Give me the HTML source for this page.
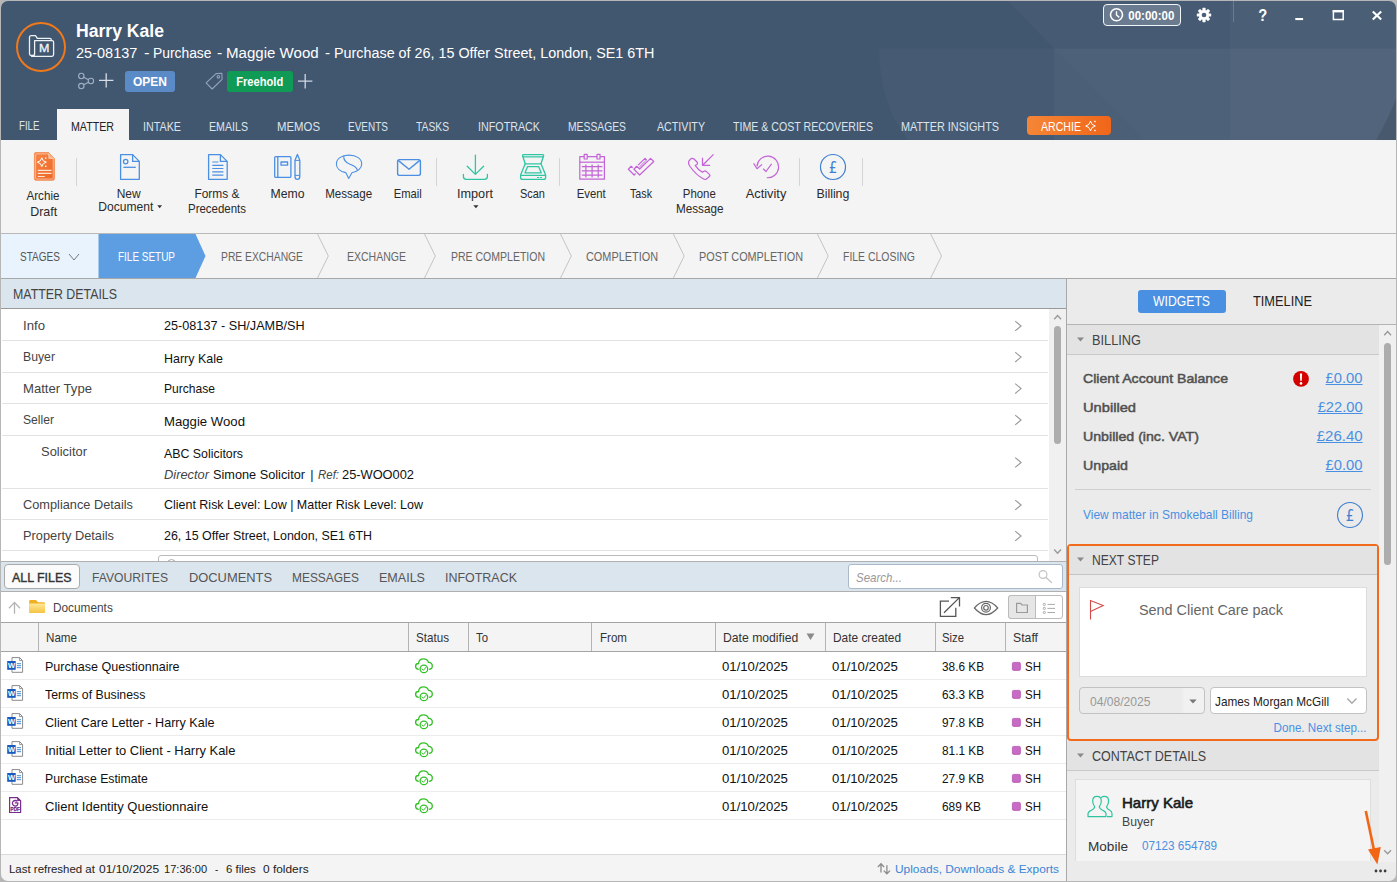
<!DOCTYPE html>
<html lang="en">
<head>
<meta charset="utf-8">
<title>Harry Kale - Matter</title>
<style>
*{box-sizing:border-box;margin:0;padding:0}
html,body{width:1397px;height:882px;overflow:hidden;background:#f4f4f4;font-family:"Liberation Sans",sans-serif}
#app{position:relative;width:1397px;height:882px;overflow:hidden;background:#f4f4f4}
.b{position:absolute}
.t{position:absolute;white-space:pre;line-height:1}
svg{position:absolute;overflow:visible}
/* header */
#hdr{left:0;top:0;width:1397px;height:140px;background:#41566f;overflow:hidden}
#hdr .g1{display:none}
.vsep{position:absolute;width:1px;background:#d4d4d4}
.hline{position:absolute;height:1px}
.rowline{position:absolute;left:2px;width:1046px;height:1px;background:#e2e2e2}
.frow{position:absolute;left:1px;width:1065px;height:1px;background:#ececec}
.colsep{position:absolute;top:623px;width:1px;height:28px;background:#b4b4b4}
</style>
</head>
<body>
<div id="app">
<!-- ===== header ===== -->
<div id="hdr" class="b"><div class="g1 b"></div>
<svg style="left:0;top:0" width="1397" height="140" viewBox="0 0 1397 140">
<path d="M879 48.500Q880 105 908 140H1397V48.500Z" fill="#fff" fill-opacity=".03"/>
<path d="M1007 0L1054 48.500V140H1397V0Z" fill="#fff" fill-opacity=".03"/>
<path d="M1054 48.500L1144 140H1397V48.500Z" fill="#fff" fill-opacity=".012"/>
<rect x="1230" y="0" width="167" height="140" fill="#fff" fill-opacity=".022"/>
<path d="M1397 96Q1388 120 1376 140H1397Z" fill="#000" fill-opacity=".1"/>
</svg>

</div>
<div class="b" style="left:57px;top:109px;width:72px;height:32px;background:#f4f4f4"></div>
<div class="b" style="left:125px;top:70.500px;width:50px;height:21px;background:#5b8bc7;border-radius:3px"></div>
<div class="b" style="left:227px;top:70.500px;width:66px;height:21px;background:#0f9b56;border-radius:3px"></div>
<div class="b" style="left:1103px;top:4px;width:78px;height:22px;border:1px solid #f2f5f8;border-radius:4px;background:rgba(255,255,255,.2)"></div>
<div class="b" style="left:1233px;top:1px;width:1px;height:21px;background:#6a7c92"></div>
<div class="b" style="left:1027px;top:116px;width:84px;height:19px;border-radius:4px;background:linear-gradient(90deg,#f58636,#f0661a)"></div>
<svg style="left:0;top:0" width="1397" height="140" viewBox="0 0 1397 140">
<!-- matter circle icon -->
<circle cx="41" cy="47" r="24" fill="none" stroke="#f0791b" stroke-width="2"/>
<g fill="none" stroke="#eef2f6" stroke-width="1.3" stroke-linejoin="round">
<path d="M34.5 55.5H31.2Q29.5 55.5 29.5 53.8V37.2Q29.5 35.6 31.2 35.6H35.5L37.3 38.3H49.8Q51.3 38.3 51.3 39.8V40.6"/>
<path d="M34.6 40.7H52Q53.6 40.7 53.6 42.3V54.6Q53.6 56.3 52 56.3H31.6Q34.6 56.3 34.6 53.4Z"/>
</g>
<text x="44.200" y="52.200" font-family="Liberation Sans, sans-serif" font-size="11.800" fill="#eef2f6" stroke="#eef2f6" stroke-width=".350" text-anchor="middle" textLength="10.400" lengthAdjust="spacingAndGlyphs">M</text>
<!-- share + plus -->
<g fill="none" stroke="#9fb0c3" stroke-width="1.1">
<circle cx="81.3" cy="76" r="2.7"/><circle cx="90.9" cy="81" r="2.7"/><circle cx="81.3" cy="86.1" r="2.7"/>
<path d="M83.7 77.3L88.5 79.8M88.5 82.3L83.7 84.8"/>
</g>
<path d="M99 80.4H113.4M106.2 73.2V87.6" stroke="#d6dde6" stroke-width="1.3" fill="none"/>
<!-- tag + plus -->
<g fill="none" stroke="#93a5b9" stroke-width="1.1" stroke-linejoin="round">
<path d="M221.9 73.3L222.1 79.3L212.1 89L206.1 82.8L216.1 73.6Z"/><circle cx="218.4" cy="76.8" r="1.3"/>
</g>
<path d="M298 81.2H312.4M305.2 74V88.4" stroke="#d0d8e2" stroke-width="1.3" fill="none"/>
<!-- clock -->
<circle cx="1116.500" cy="14.800" r="6" fill="none" stroke="#fff" stroke-width="1.600"/>
<path d="M1116.5 11.2V15L1119.3 17.4" fill="none" stroke="#fff" stroke-width="1.4"/>
<!-- gear -->
<g transform="translate(1204 15)" fill="#fff">
<circle r="5.1"/>
<g><rect x="-1.6" y="-7.2" width="3.2" height="14.4" rx=".6"/><rect x="-1.6" y="-7.2" width="3.2" height="14.4" rx=".6" transform="rotate(45)"/>
<rect x="-1.6" y="-7.2" width="3.2" height="14.4" rx=".6" transform="rotate(90)"/><rect x="-1.6" y="-7.2" width="3.2" height="14.4" rx=".6" transform="rotate(135)"/></g>
<circle r="2.3" fill="#4a5f78"/>
</g>
<!-- window controls -->
<rect x="1295.3" y="18" width="7.8" height="2.1" fill="#fff"/>
<path d="M1333.4 11.4H1343.2V19.4H1333.4Z" fill="none" stroke="#fff" stroke-width="1.5"/><rect x="1332.6" y="10" width="11.4" height="2.2" fill="#fff"/>
<path d="M1372.8 11.4L1381.2 19.6M1381.2 11.4L1372.8 19.6" stroke="#fff" stroke-width="2.1" fill="none"/>
<!-- archie sparkle -->
<path d="M1090.5 121.2Q1091.3 125.2 1095.3 126Q1091.3 126.8 1090.5 130.8Q1089.7 126.8 1085.7 126Q1089.7 125.2 1090.5 121.2Z" fill="none" stroke="#fff" stroke-width="1"/>
<rect x="1094.2" y="120.8" width="1.4" height="1.4" fill="#fff"/><rect x="1094.2" y="129.8" width="1.4" height="1.4" fill="#fff"/>
</svg>

<!-- ===== ribbon ===== -->
<div class="b" style="left:0;top:140px;width:1397px;height:93px;background:#f4f4f4"></div>
<div class="vsep" style="left:76px;top:158px;height:28px"></div>
<div class="vsep" style="left:436px;top:158px;height:28px"></div>
<div class="vsep" style="left:559px;top:158px;height:28px"></div>
<div class="vsep" style="left:799px;top:158px;height:28px"></div>
<div class="vsep" style="left:862px;top:158px;height:28px"></div>
<svg style="left:0;top:140px" width="900" height="93" viewBox="0 140 900 93">
<defs><linearGradient id="og" x1="0" y1="0" x2="1" y2="1"><stop offset="0" stop-color="#f6874a"/><stop offset="1" stop-color="#ef6520"/></linearGradient></defs>
<!-- Archie draft -->
<path d="M35.6 152.6H48.6L54.4 158.6V178.6Q54.4 180.2 52.8 180.2H35.6Q34.4 180.2 34.4 178.8V153.8Q34.4 152.6 35.6 152.6Z" fill="url(#og)" stroke="#f4915a" stroke-width="1"/>
<path d="M36.300 153.900H48.100L53.200 159.200V178.100Q53.200 179 52.300 179H36.300Q35.600 179 35.600 178.200V154.600Q35.600 153.900 36.300 153.900Z" fill="none" stroke="#fcd9c4" stroke-width=".700"/>
<path d="M48.8 153.2V158.4H54" fill="#f9b892" stroke="#fbd0b6" stroke-width=".8"/>
<path d="M41.800 157.700Q42.400 161.600 46.300 162.200Q42.400 162.800 41.800 166.700Q41.200 162.800 37.300 162.200Q41.200 161.600 41.800 157.700Z" fill="none" stroke="#fff" stroke-width="1"/>
<rect x="45" y="157.4" width="1.4" height="1.4" fill="#fff"/><rect x="45" y="165.6" width="1.4" height="1.4" fill="#fff"/>
<path d="M37.8 170.3H51.6M37.8 173.4H51.6M37.8 176.5H44.8" stroke="#fde3d3" stroke-width="1.2" fill="none"/>
<g fill="none" stroke="#4a8fe3" stroke-width="1.3" stroke-linejoin="round">
<!-- New document -->
<path d="M120.6 154.6H132.6L139.3 161.4V179.3H120.6Z"/><path d="M132.6 154.8V161.4H139.2" /><circle cx="125.7" cy="161.6" r="2.2"/><path d="M123.4 167.3H135.8"/>
<!-- Forms -->
<path d="M208.6 154.6H220.4L227.2 161.4V179.3H208.6Z"/><path d="M220.4 154.8V161.4H227"/>
<path d="M212.3 162H218.4M212.3 165.3H223.4M212.3 168.5H223.4M212.3 171.8H223.4M212.3 175.1H223.4" stroke-width="1.2"/>
<!-- Memo -->
<rect x="274.7" y="156.6" width="16.2" height="20.8" rx="1.2"/><path d="M277.8 156.6V177.4"/><rect x="281" y="162" width="6.6" height="3.2" />
<path d="M295 160.2V176.2Q295 179.4 297.4 179.4Q299.8 179.4 299.8 176.2V160.2L297.4 154.4Z"/><path d="M295 160.4H299.8M295 175.4H299.8" stroke-width="1"/>
<!-- Message -->
<path d="M349 155.1C356.6 155.1 361.7 158.8 361.7 163.9C361.7 168.4 357.6 171.9 351.9 172.7L348.7 178.4L345.8 172.6C340.3 171.7 336.4 168.3 336.4 163.9C336.4 158.8 341.4 155.1 349 155.1Z" stroke-width="1.1"/>
<path d="M343.8 155.8C343.2 160.6 346.2 162.8 350 164.2C353.6 165.5 356.6 166.8 357.6 170.4" stroke-width="1.1"/>
<!-- Email -->
<rect x="397.6" y="159.6" width="22.8" height="15.8" rx="1.8" stroke-width="1.4"/><path d="M398.2 160.4L409 169.2L419.8 160.4" stroke-width="1.4"/>
</g>
<g fill="none" stroke="#30c5a2" stroke-width="1.3" stroke-linejoin="round" stroke-linecap="round">
<!-- Import -->
<path d="M475.4 155.2V174.2M467.2 166.2L475.4 174.4L483.6 166.2"/><path d="M463.4 174.4V176.6Q463.4 179.4 466.2 179.4H484.6Q487.4 179.4 487.4 176.6V174.4"/>
<!-- Scan -->
<path d="M523.6 154.6H542.6Q543.8 154.6 543.6 155.8L541 163.8H525.2L522.6 155.8Q522.4 154.6 523.6 154.6Z"/><path d="M523 156.8H543.2"/>
<path d="M525.2 163.8L520.6 175V177.4Q520.6 179.4 522.6 179.4H543.6Q545.6 179.4 545.6 177.4V175L541 163.8"/>
<path d="M520.8 175.4H545.4"/><path d="M527.6 166.6H538.6L541.2 172.8H525Z"/><path d="M537.4 177.5H538.6M540.4 177.5H541.6" stroke-width="1"/>
</g>
<g fill="none" stroke="#c463d8" stroke-width="1.2" stroke-linejoin="round">
<!-- Event -->
<rect x="579.8" y="156.6" width="24.6" height="22.6"/><path d="M579.8 162.2H604.4"/>
<rect x="584.2" y="154.4" width="3" height="4.6" fill="#f4f4f4"/><rect x="597" y="154.4" width="3" height="4.6" fill="#f4f4f4"/>
<path d="M585.9 164.4V177.4M592.1 164.4V177.4M598.2 164.4V177.4M581.8 166.6H602.4M581.8 170.8H602.4M581.8 175.1H602.4"/>
<!-- Task -->
<path d="M628.350 169.250L634.100 175L648.200 161.500L645 158.330L634.100 169.050L631.100 166.270Z"/>
<path d="M633.900 169.250L639.660 175L653.750 161.500L650.570 158.330L639.660 169.050L636.680 166.270Z" fill="#f4f4f4" stroke="#f4f4f4" stroke-width="3.800"/>
<path d="M633.900 169.250L639.660 175L653.750 161.500L650.570 158.330L639.660 169.050L636.680 166.270Z"/>
<path d="M645 158.330L646.600 159.900L639.300 167.100" stroke-width="1"/>
<!-- Phone -->
<path d="M692.200 158.300Q693.200 158.300 694 159L697 162Q698 163.200 697.200 164.200L695.300 165.600Q698 169.600 702.400 172.300L704 171.200Q705.200 170.600 706.400 171.600L709.400 174.400Q710.400 175.600 709.400 176.600L706.400 179Q705.200 179.800 703.600 179Q696.500 175.500 690 166.500Q688 163.500 688.600 161.800Q689 160.600 690.400 159.200Q691.200 158.300 692.200 158.300Z" stroke-width="1.250"/>
<path d="M713.500 154.400L702.900 165M702.500 157.800V165.300H710" stroke-width="1.250"/>
<!-- Activity -->
<path d="M757 166.4A10.800 10.800 0 1 1 766.8 177.700"/><path d="M753.600 163.400L757 168.700L762 164.400"/><path d="M763.200 168.800L766 171.500L771.600 163.800"/>
</g>
<!-- Billing -->
<circle cx="833" cy="167" r="12.500" fill="none" stroke="#3f7fd0" stroke-width="1.200"/>
<!-- dropdown arrows -->
<path d="M157.300 205.200H162L159.650 208.300Z" fill="#333"/><path d="M473.300 205.200H478.500L475.900 208.300Z" fill="#333"/>
</svg>

<!-- ===== stages ===== -->
<div class="hline" style="left:0;top:233px;width:1397px;background:#b9b9b9"></div>
<div class="b" style="left:1px;top:234px;width:97px;height:44px;background:#e9f3fd"></div>
<svg style="left:98px;top:234px" width="900" height="44" viewBox="0 0 900 44">
<path d="M0.5 0H97.5L107.5 22L97.5 44H0.5Z" fill="#5d9ee3"/>
<g fill="none" stroke="#c4c4c4" stroke-width="1">
<path d="M219.500 0l10.800 22l-10.800 22"/><path d="M326.500 0l10.800 22l-10.800 22"/><path d="M462.500 0l10.800 22l-10.800 22"/>
<path d="M575.400 0l10.800 22l-10.800 22"/><path d="M719.400 0l10.800 22l-10.800 22"/><path d="M832.700 0l10.800 22l-10.800 22"/>
</g></svg>
<svg style="left:68px;top:253px" width="12" height="9" viewBox="0 0 12 9"><path d="M1 1l5 6L11 1" fill="none" stroke="#777" stroke-width="1"/></svg>
<div class="hline" style="left:0;top:278px;width:1397px;background:#a8a8a8"></div>
<!-- ===== matter details ===== -->
<div class="b" style="left:1px;top:279px;width:1065px;height:29px;background:#dbe5ee"></div>
<div class="hline" style="left:1px;top:308px;width:1065px;background:#9a9a9a"></div>
<div class="b" style="left:1px;top:309px;width:1048px;height:252px;background:#fff"></div>
<div class="rowline" style="top:340px"></div><div class="rowline" style="top:372px"></div><div class="rowline" style="top:403px"></div>
<div class="rowline" style="top:435px"></div><div class="rowline" style="top:488px"></div><div class="rowline" style="top:519px"></div><div class="rowline" style="top:550px"></div>
<div class="b" style="left:158px;top:555px;width:880px;height:10px;border:1px solid #bbb;border-radius:3px;background:#fff"></div>
<div class="b" style="left:167px;top:558.500px;width:9px;height:9px;border:1px solid #aaa;border-radius:50%"></div>
<!-- details scrollbar -->
<div class="b" style="left:1049px;top:309px;width:17px;height:252px;background:#f0f0f0"></div>
<div class="b" style="left:1054px;top:326px;width:7px;height:118px;border-radius:4px;background:#adadad"></div>
<svg style="left:0;top:279px" width="1066" height="290" viewBox="0 279 1066 290">
<g fill="none" stroke="#999" stroke-width="1.100">
<path d="M1015.200 321.1L1021.100 326.0L1015.200 330.9"/>
<path d="M1015.200 352.2L1021.100 357.1L1015.200 362.0"/>
<path d="M1015.200 383.7L1021.100 388.6L1015.200 393.5"/>
<path d="M1015.200 415.1L1021.100 420.0L1015.200 424.9"/>
<path d="M1015.200 457.6L1021.100 462.5L1015.200 467.4"/>
<path d="M1015.200 500.1L1021.100 505.0L1015.200 509.9"/>
<path d="M1015.200 531.1L1021.100 536.0L1015.200 540.9"/>
</g><g fill="none" stroke="#999" stroke-width="1.400"><path d="M1054.200 319.200L1057.600 315.600L1061 319.200"/><path d="M1054.200 549.600L1057.600 553.200L1061 549.600"/>
</g></svg>
<!-- ===== files ===== -->
<div class="hline" style="left:1px;top:561px;width:1065px;background:#b0b0b0"></div>
<div class="b" style="left:1px;top:562px;width:1065px;height:29px;background:#dbe5ee"></div>
<div class="b" style="left:4px;top:564px;width:76px;height:25px;background:#fbfbfb;border:1px solid #aaa;border-radius:4px"></div>
<div class="b" style="left:848px;top:564px;width:215px;height:25px;background:#fff;border:1px solid #a9b9c9;border-radius:3px"></div>
<div class="hline" style="left:1px;top:591px;width:1065px;background:#b0b0b0"></div>
<div class="b" style="left:1px;top:592px;width:1065px;height:263px;background:#fff"></div>
<div class="b" style="left:1008px;top:595px;width:55px;height:24px;border:1px solid #bbb;border-radius:3px;background:#fff"></div>
<div class="b" style="left:1008px;top:595px;width:28px;height:24px;border:1px solid #bbb;border-radius:3px 0 0 3px;background:#e6e6e6"></div>
<div class="hline" style="left:1px;top:622px;width:1065px;background:#a4a4a4"></div>
<div class="b" style="left:1px;top:623px;width:1065px;height:28px;background:#f4f4f4"></div>
<div class="hline" style="left:1px;top:651px;width:1065px;background:#a4a4a4"></div>
<div class="colsep" style="left:38px"></div><div class="colsep" style="left:408px"></div><div class="colsep" style="left:468px"></div><div class="colsep" style="left:591px"></div>
<div class="colsep" style="left:715px"></div><div class="colsep" style="left:825px"></div><div class="colsep" style="left:935px"></div><div class="colsep" style="left:1005px"></div>
<div class="frow" style="top:679px"></div><div class="frow" style="top:707px"></div><div class="frow" style="top:735px"></div>
<div class="frow" style="top:763px"></div><div class="frow" style="top:791px"></div><div class="frow" style="top:819px"></div>
<!-- status bar -->
<div class="hline" style="left:1px;top:854px;width:1065px;background:#dadada"></div>
<div class="b" style="left:1px;top:855px;width:1065px;height:27px;background:#f4f4f4"></div>
<svg style="left:0;top:560px" width="1066" height="322" viewBox="0 560 1066 322">
<g fill="none" stroke="#c2c2c2" stroke-width="1.2"><circle cx="1043" cy="574.500" r="3.900"/><path d="M1045.800 577.300L1051.800 582.800"/></g>
<path d="M14.500 613.800V602.400M9 608.200L14.500 602.400L20 608.200" fill="none" stroke="#b4b4b4" stroke-width="1.300"/>
<defs><linearGradient id="fg" x1="0" y1="0" x2="0" y2="1"><stop offset="0" stop-color="#ffe79a"/><stop offset="1" stop-color="#f6c443"/></linearGradient></defs>
<path d="M29.200 601.200Q29.200 600 30.400 600H36L38 602.200H43.800Q45 602.200 45 603.400V611.700Q45 612.900 43.800 612.900H30.400Q29.200 612.900 29.200 611.700Z" fill="#efb021"/>
<path d="M29.200 603.400H45V611.700Q45 612.900 43.800 612.900H30.400Q29.200 612.900 29.200 611.700Z" fill="url(#fg)"/>
<g fill="none" stroke="#555" stroke-width="1.300"><path d="M949 601.200H940.400V616.400H955.800V607.800"/><path d="M944 612.800L959.400 597.600M950.800 597.600H959.500V606.400"/></g>
<g fill="none" stroke="#6a6a6a" stroke-width="1.200"><path d="M974.400 608Q986 594.800 997.700 608Q986 621.200 974.400 608Z"/><circle cx="986" cy="607.800" r="4.400"/><circle cx="986" cy="607.800" r="2.300"/></g>
<path d="M1016.600 612.500V603.400H1020.600L1022 605H1027.400V612.500Z" fill="none" stroke="#9a9a9a" stroke-width="1.200"/>
<g fill="none" stroke="#aaa" stroke-width="1"><circle cx="1044.300" cy="604.400" r="1.100"/><circle cx="1044.300" cy="608.400" r="1.100"/><circle cx="1044.300" cy="612.500" r="1.100"/><path d="M1047.500 604.400H1055M1047.500 608.400H1055M1047.500 612.500H1055"/></g>
<path d="M806.500 633.500H814.500L810.500 640Z" fill="#8a8a8a"/>
<g transform="translate(0 0)"><path d="M12 657.600H19.600L22.600 660.600V672.300H12Z" fill="#fff" stroke="#8a8a8a" stroke-width="1"/><path d="M19.600 657.800V660.600H22.400" fill="none" stroke="#8a8a8a" stroke-width=".9"/><rect x="7.200" y="661" width="8.500" height="8.800" fill="#185abd"/><path d="M16.800 663.700H21M16.800 665.700H21M16.800 667.700H21" stroke="#2b7cd3" stroke-width=".9" fill="none"/><text x="11.450" y="668.400" font-family="Liberation Sans, sans-serif" font-size="7.500" font-weight="700" fill="#fff" text-anchor="middle">W</text></g>
<g transform="translate(0 0)" fill="none" stroke="#31c024" stroke-width="1.300" stroke-linecap="round"><path d="M419.600 669.300H418.800C416.800 669.300 415.600 667.900 415.600 666.300C415.600 664.700 416.900 663.500 418.500 663.500C418.800 660.700 420.900 658.900 423.600 658.900C426 658.900 427.900 660.300 428.500 662.400C430.600 662.500 432.300 664 432.300 666C432.300 667.900 430.800 669.300 428.800 669.300H428.200"/><circle cx="423.900" cy="668.900" r="5.200" fill="#fff" stroke="none"/><circle cx="423.900" cy="668.900" r="3.800" fill="#fff"/><path d="M422 668.800L423.400 670.300L426 667.300" stroke-width="1"/></g>
<rect x="1012.400" y="662.4" width="8" height="8" rx="1.300" fill="#c86bc4" stroke="#b556b1" stroke-width=".800"/>
<g transform="translate(0 28)"><path d="M12 657.600H19.600L22.600 660.600V672.300H12Z" fill="#fff" stroke="#8a8a8a" stroke-width="1"/><path d="M19.600 657.800V660.600H22.400" fill="none" stroke="#8a8a8a" stroke-width=".9"/><rect x="7.200" y="661" width="8.500" height="8.800" fill="#185abd"/><path d="M16.800 663.700H21M16.800 665.700H21M16.800 667.700H21" stroke="#2b7cd3" stroke-width=".9" fill="none"/><text x="11.450" y="668.400" font-family="Liberation Sans, sans-serif" font-size="7.500" font-weight="700" fill="#fff" text-anchor="middle">W</text></g>
<g transform="translate(0 28)" fill="none" stroke="#31c024" stroke-width="1.300" stroke-linecap="round"><path d="M419.600 669.300H418.800C416.800 669.300 415.600 667.900 415.600 666.300C415.600 664.700 416.900 663.500 418.500 663.500C418.800 660.700 420.900 658.900 423.600 658.900C426 658.900 427.900 660.300 428.500 662.400C430.600 662.500 432.300 664 432.300 666C432.300 667.900 430.800 669.300 428.800 669.300H428.200"/><circle cx="423.900" cy="668.900" r="5.200" fill="#fff" stroke="none"/><circle cx="423.900" cy="668.900" r="3.800" fill="#fff"/><path d="M422 668.800L423.400 670.300L426 667.300" stroke-width="1"/></g>
<rect x="1012.400" y="690.4" width="8" height="8" rx="1.300" fill="#c86bc4" stroke="#b556b1" stroke-width=".800"/>
<g transform="translate(0 56)"><path d="M12 657.600H19.600L22.600 660.600V672.300H12Z" fill="#fff" stroke="#8a8a8a" stroke-width="1"/><path d="M19.600 657.800V660.600H22.400" fill="none" stroke="#8a8a8a" stroke-width=".9"/><rect x="7.200" y="661" width="8.500" height="8.800" fill="#185abd"/><path d="M16.800 663.700H21M16.800 665.700H21M16.800 667.700H21" stroke="#2b7cd3" stroke-width=".9" fill="none"/><text x="11.450" y="668.400" font-family="Liberation Sans, sans-serif" font-size="7.500" font-weight="700" fill="#fff" text-anchor="middle">W</text></g>
<g transform="translate(0 56)" fill="none" stroke="#31c024" stroke-width="1.300" stroke-linecap="round"><path d="M419.600 669.300H418.800C416.800 669.300 415.600 667.900 415.600 666.300C415.600 664.700 416.900 663.500 418.500 663.500C418.800 660.700 420.900 658.900 423.600 658.900C426 658.900 427.900 660.300 428.500 662.400C430.600 662.500 432.300 664 432.300 666C432.300 667.900 430.800 669.300 428.800 669.300H428.200"/><circle cx="423.900" cy="668.900" r="5.200" fill="#fff" stroke="none"/><circle cx="423.900" cy="668.900" r="3.800" fill="#fff"/><path d="M422 668.800L423.400 670.300L426 667.300" stroke-width="1"/></g>
<rect x="1012.400" y="718.4" width="8" height="8" rx="1.300" fill="#c86bc4" stroke="#b556b1" stroke-width=".800"/>
<g transform="translate(0 84)"><path d="M12 657.600H19.600L22.600 660.600V672.300H12Z" fill="#fff" stroke="#8a8a8a" stroke-width="1"/><path d="M19.600 657.800V660.600H22.400" fill="none" stroke="#8a8a8a" stroke-width=".9"/><rect x="7.200" y="661" width="8.500" height="8.800" fill="#185abd"/><path d="M16.800 663.700H21M16.800 665.700H21M16.800 667.700H21" stroke="#2b7cd3" stroke-width=".9" fill="none"/><text x="11.450" y="668.400" font-family="Liberation Sans, sans-serif" font-size="7.500" font-weight="700" fill="#fff" text-anchor="middle">W</text></g>
<g transform="translate(0 84)" fill="none" stroke="#31c024" stroke-width="1.300" stroke-linecap="round"><path d="M419.600 669.300H418.800C416.800 669.300 415.600 667.900 415.600 666.300C415.600 664.700 416.900 663.500 418.500 663.500C418.800 660.700 420.900 658.900 423.600 658.900C426 658.900 427.900 660.300 428.500 662.400C430.600 662.500 432.300 664 432.300 666C432.300 667.900 430.800 669.300 428.800 669.300H428.200"/><circle cx="423.900" cy="668.900" r="5.200" fill="#fff" stroke="none"/><circle cx="423.900" cy="668.900" r="3.800" fill="#fff"/><path d="M422 668.800L423.400 670.300L426 667.300" stroke-width="1"/></g>
<rect x="1012.400" y="746.4" width="8" height="8" rx="1.300" fill="#c86bc4" stroke="#b556b1" stroke-width=".800"/>
<g transform="translate(0 112)"><path d="M12 657.600H19.600L22.600 660.600V672.300H12Z" fill="#fff" stroke="#8a8a8a" stroke-width="1"/><path d="M19.600 657.800V660.600H22.400" fill="none" stroke="#8a8a8a" stroke-width=".9"/><rect x="7.200" y="661" width="8.500" height="8.800" fill="#185abd"/><path d="M16.800 663.700H21M16.800 665.700H21M16.800 667.700H21" stroke="#2b7cd3" stroke-width=".9" fill="none"/><text x="11.450" y="668.400" font-family="Liberation Sans, sans-serif" font-size="7.500" font-weight="700" fill="#fff" text-anchor="middle">W</text></g>
<g transform="translate(0 112)" fill="none" stroke="#31c024" stroke-width="1.300" stroke-linecap="round"><path d="M419.600 669.300H418.800C416.800 669.300 415.600 667.900 415.600 666.300C415.600 664.700 416.900 663.500 418.500 663.500C418.800 660.700 420.900 658.900 423.600 658.900C426 658.900 427.900 660.300 428.500 662.400C430.600 662.500 432.300 664 432.300 666C432.300 667.900 430.800 669.300 428.800 669.300H428.200"/><circle cx="423.900" cy="668.900" r="5.200" fill="#fff" stroke="none"/><circle cx="423.900" cy="668.900" r="3.800" fill="#fff"/><path d="M422 668.800L423.400 670.300L426 667.300" stroke-width="1"/></g>
<rect x="1012.400" y="774.4" width="8" height="8" rx="1.300" fill="#c86bc4" stroke="#b556b1" stroke-width=".800"/>
<g transform="translate(0 140)"><path d="M9.600 657.600H17.400L20.600 660.800V672.500H9.600Z" fill="#fff" stroke="#7b2d8e" stroke-width="1.200"/><path d="M17.200 657.200V661H21Z" fill="#7b2d8e"/><path d="M17.300 661.400A2.800 2.800 0 1 0 17.700 664.600M14.800 662.900H17.800V664.600" fill="none" stroke="#7b2d8e" stroke-width="1.300"/><text x="15.200" y="671.200" font-family="Liberation Sans, sans-serif" font-size="5.200" font-weight="700" fill="#6a1f7d" stroke="#6a1f7d" stroke-width=".250" text-anchor="middle" textLength="9.200" lengthAdjust="spacingAndGlyphs">PDF</text></g>
<g transform="translate(0 140)" fill="none" stroke="#31c024" stroke-width="1.300" stroke-linecap="round"><path d="M419.600 669.300H418.800C416.800 669.300 415.600 667.900 415.600 666.300C415.600 664.700 416.900 663.500 418.500 663.500C418.800 660.700 420.900 658.900 423.600 658.900C426 658.900 427.900 660.300 428.500 662.400C430.600 662.500 432.300 664 432.300 666C432.300 667.900 430.800 669.300 428.800 669.300H428.200"/><circle cx="423.900" cy="668.900" r="5.200" fill="#fff" stroke="none"/><circle cx="423.900" cy="668.900" r="3.800" fill="#fff"/><path d="M422 668.800L423.400 670.300L426 667.300" stroke-width="1"/></g>
<rect x="1012.400" y="802.4" width="8" height="8" rx="1.300" fill="#c86bc4" stroke="#b556b1" stroke-width=".800"/>
<g fill="none" stroke="#8c8c8c" stroke-width="1.300"><path d="M881 872.400V863.800M877.900 867L881 863.800L884.100 867"/><path d="M886.900 865.200V873.800M883.800 870.600L886.900 873.800L890 870.600"/></g>
</svg>
<!-- ===== right panel ===== -->
<div class="b" style="left:1066px;top:279px;width:1px;height:603px;background:#a8a8a8"></div>
<div class="b" style="left:1067px;top:279px;width:330px;height:603px;background:#ebebeb"></div>
<div class="b" style="left:1138px;top:290px;width:88px;height:23px;background:#4a90e2;border-radius:3px"></div>
<div class="hline" style="left:1067px;top:324px;width:330px;background:#b4b4b4"></div>
<div class="b" style="left:1067px;top:325px;width:312px;height:536px;background:#ebebeb"></div>
<div class="b" style="left:1067px;top:325px;width:312px;height:30px;background:#e3e3e3;border-bottom:1px solid #c9c9c9"></div>
<div class="hline" style="left:1075px;top:489px;width:296px;background:#cfcfcf"></div>
<!-- next step -->
<div class="b" style="left:1067px;top:543.500px;width:311.500px;height:197px;border:2px solid #f26b1d;border-radius:4px;background:#ebebeb"></div>
<div class="b" style="left:1069px;top:545.500px;width:307.500px;height:29.500px;background:#e3e3e3;border-bottom:1px solid #c4c4c4"></div>
<div class="b" style="left:1079px;top:587px;width:288px;height:90px;background:#fff;border:1px solid #dcdcdc"></div>
<div class="b" style="left:1079px;top:687px;width:126px;height:27px;background:linear-gradient(90deg,#ebebeb 82%,#f1f1f1 84%);border:1px solid #c2c2c2;border-radius:4px"></div>
<div class="b" style="left:1210px;top:687px;width:157px;height:27px;background:#fff;border:1px solid #c2c2c2;border-radius:4px"></div>
<!-- contact -->
<div class="b" style="left:1067px;top:741px;width:312px;height:30px;background:#e3e3e3;border-bottom:1px solid #c9c9c9"></div>
<div class="b" style="left:1075px;top:779px;width:296px;height:90px;background:#f4f4f4;border:1px solid #dedede"></div>
<div class="b" style="left:1067px;top:861px;width:330px;height:21px;background:#ebebeb"></div>
<!-- right scrollbar -->
<div class="b" style="left:1379px;top:325px;width:17px;height:537px;background:#f0f0f0"></div>
<div class="b" style="left:1384px;top:342.500px;width:7px;height:222px;border-radius:4px;background:#adadad"></div>
<svg style="left:1066px;top:279px" width="331" height="603" viewBox="1066 279 331 603">
<path d="M1077 337.5H1084L1080.500 341.5Z" fill="#8a8a8a"/>
<path d="M1077 557.5H1084L1080.500 561.5Z" fill="#8a8a8a"/>
<path d="M1077 753.5H1084L1080.500 757.5Z" fill="#8a8a8a"/>
<circle cx="1301" cy="378.900" r="7.900" fill="#d30000"/><path d="M1299.900 373.600H1302.100L1301.800 380.800H1300.200Z" fill="#fff"/><circle cx="1301" cy="383.400" r="1.300" fill="#fff"/>
<circle cx="1350" cy="515" r="12.500" fill="none" stroke="#3f7fd0" stroke-width="1.100"/>
<path d="M1090.500 619.500V600.500L1103.200 605.600L1090.500 611.600" fill="none" stroke="#d24a4a" stroke-width="1.100"/>
<path d="M1189.300 699.600H1196.700L1193 703.400Z" fill="#777"/>
<path d="M1347.300 698.600L1351.900 703.200L1356.500 698.600" fill="none" stroke="#a8a8a8" stroke-width="1.400"/>
<g fill="none" stroke="#2fc3a0" stroke-width="1.200" stroke-linejoin="round"><path d="M1101 797.600Q1102.500 796.300 1104.400 796.300C1107.200 796.300 1108.600 798.400 1108.600 801C1108.600 803.600 1107.600 805.400 1106.600 806.600C1106.600 808.800 1108 809.400 1109.800 810.200C1111.400 811 1112 812.200 1112 813.800V816.600H1107"/><path d="M1097 796.300C1099.800 796.300 1101.300 798.400 1101.300 801C1101.300 803.600 1100.300 805.400 1099.300 806.600C1099.300 808.800 1100.700 809.400 1102.600 810.200C1105 811.200 1106 812.200 1106 813.800V816.600H1088V813.800C1088 812.200 1089 811.200 1091.400 810.200C1093.300 809.400 1094.700 808.800 1094.700 806.600C1093.700 805.400 1092.700 803.600 1092.700 801C1092.700 798.400 1094.200 796.300 1097 796.300Z"/></g>
<g fill="none" stroke="#999" stroke-width="1.400"><path d="M1384.200 335.200L1387.600 331.600L1391 335.200"/><path d="M1384.200 850.200L1387.600 853.800L1391 850.200"/></g>
<circle cx="1376" cy="871" r="1.400" fill="#3a3a3a"/><circle cx="1380.550" cy="871" r="1.400" fill="#3a3a3a"/><circle cx="1385.100" cy="871" r="1.400" fill="#3a3a3a"/>
<path d="M1365.800 811L1374.400 852" stroke="#f26514" stroke-width="2.600" fill="none"/><path d="M1377.400 864.400L1368 849.600L1380.800 847Z" fill="#f26514"/>
</svg>
<!-- window frame -->
<svg style="left:0;top:0" width="1397" height="882" viewBox="0 0 1397 882"><path fill="#b6b6b6" fill-rule="evenodd" d="M0 0H1397V882H0Z M8 1H1389A7 7 0 0 1 1396 8V874A7 7 0 0 1 1389 881H8A7 7 0 0 1 1 874V8A7 7 0 0 1 8 1Z"/></svg>
<span class="t" style="left:76.00px;top:22.32px;font-size:18.52px;color:#ffffff;transform:scaleX(0.9499);transform-origin:0 0;font-weight:700;">Harry Kale</span>
<span class="t" style="left:76.00px;top:45.99px;font-size:14.43px;color:#ffffff;"><span style="display:inline-block;width:67.90px;transform:scaleX(1.0073);transform-origin:0 0">25-08137 </span><span style="display:inline-block;width:9.40px;transform:scaleX(1.1636);transform-origin:0 0">- </span><span style="display:inline-block;width:64.00px;transform:scaleX(0.9600);transform-origin:0 0">Purchase </span><span style="display:inline-block;width:9.10px;transform:scaleX(1.0805);transform-origin:0 0">- </span><span style="display:inline-block;width:98.80px;transform:scaleX(1.0447);transform-origin:0 0">Maggie Wood </span><span style="display:inline-block;width:9.00px;transform:scaleX(1.0597);transform-origin:0 0">- </span><span style="display:inline-block;width:322.40px;transform:scaleX(0.9950);transform-origin:0 0">Purchase of 26, 15 Offer Street, London, SE1 6TH</span></span>
<span class="t" style="left:132.06px;top:76.07px;font-size:12.67px;color:#ffffff;transform:scaleX(0.9477);transform-origin:50% 0;font-weight:700;">OPEN</span>
<span class="t" style="left:232.77px;top:76.07px;font-size:12.67px;color:#ffffff;transform:scaleX(0.8793);transform-origin:50% 0;font-weight:700;">Freehold</span>
<span class="t" style="left:1125.66px;top:10.37px;font-size:12.67px;color:#ffffff;transform:scaleX(0.9078);transform-origin:50% 0;font-weight:700;">00:00:00</span>
<span class="t" style="left:143.00px;top:121.48px;font-size:12.19px;color:#dde4ec;transform:scaleX(0.8812);transform-origin:0 0;">INTAKE</span>
<span class="t" style="left:209.00px;top:121.48px;font-size:12.19px;color:#dde4ec;transform:scaleX(0.8721);transform-origin:0 0;">EMAILS</span>
<span class="t" style="left:277.00px;top:121.48px;font-size:12.19px;color:#dde4ec;transform:scaleX(0.9338);transform-origin:0 0;">MEMOS</span>
<span class="t" style="left:348.00px;top:121.48px;font-size:12.19px;color:#dde4ec;transform:scaleX(0.8202);transform-origin:0 0;">EVENTS</span>
<span class="t" style="left:416.00px;top:121.48px;font-size:12.19px;color:#dde4ec;transform:scaleX(0.8448);transform-origin:0 0;">TASKS</span>
<span class="t" style="left:478.00px;top:121.48px;font-size:12.19px;color:#dde4ec;transform:scaleX(0.8804);transform-origin:0 0;">INFOTRACK</span>
<span class="t" style="left:568.00px;top:121.48px;font-size:12.19px;color:#dde4ec;transform:scaleX(0.8479);transform-origin:0 0;">MESSAGES</span>
<span class="t" style="left:657.00px;top:121.48px;font-size:12.19px;color:#dde4ec;transform:scaleX(0.8750);transform-origin:0 0;">ACTIVITY</span>
<span class="t" style="left:733.00px;top:121.48px;font-size:12.19px;color:#dde4ec;transform:scaleX(0.8698);transform-origin:0 0;">TIME &amp; COST RECOVERIES</span>
<span class="t" style="left:901.00px;top:121.48px;font-size:12.19px;color:#dde4ec;transform:scaleX(0.8898);transform-origin:0 0;">MATTER INSIGHTS</span>
<span class="t" style="left:19.20px;top:120.48px;font-size:12.19px;color:#dde4ec;transform:scaleX(0.7961);transform-origin:0 0;">FILE</span>
<span class="t" style="left:71.00px;top:121.48px;font-size:12.19px;color:#222;transform:scaleX(0.8739);transform-origin:0 0;">MATTER</span>
<span class="t" style="left:1041.00px;top:121.48px;font-size:12.19px;color:#ffffff;transform:scaleX(0.8684);transform-origin:0 0;">ARCHIE</span>
<span class="t" style="left:25.06px;top:190.27px;font-size:12.67px;color:#2a2a2a;transform:scaleX(0.9199);transform-origin:50% 0;">Archie</span>
<span class="t" style="left:30.28px;top:206.27px;font-size:12.67px;color:#2a2a2a;transform:scaleX(0.9841);transform-origin:50% 0;">Draft</span>
<span class="t" style="left:115.94px;top:188.27px;font-size:12.67px;color:#2a2a2a;transform:scaleX(0.9476);transform-origin:50% 0;">New</span>
<span class="t" style="left:97.06px;top:201.27px;font-size:12.67px;color:#2a2a2a;transform:scaleX(0.9534);transform-origin:50% 0;">Document</span>
<span class="t" style="left:192.59px;top:188.27px;font-size:12.67px;color:#2a2a2a;transform:scaleX(0.9409);transform-origin:50% 0;">Forms &amp;</span>
<span class="t" style="left:185.28px;top:202.97px;font-size:12.67px;color:#2a2a2a;transform:scaleX(0.9058);transform-origin:50% 0;">Precedents</span>
<span class="t" style="left:269.71px;top:188.27px;font-size:12.67px;color:#2a2a2a;transform:scaleX(0.9667);transform-origin:50% 0;">Memo</span>
<span class="t" style="left:323.32px;top:188.27px;font-size:12.67px;color:#2a2a2a;transform:scaleX(0.9151);transform-origin:50% 0;">Message</span>
<span class="t" style="left:392.17px;top:188.27px;font-size:12.67px;color:#2a2a2a;transform:scaleX(0.8845);transform-origin:50% 0;">Email</span>
<span class="t" style="left:457.06px;top:188.27px;font-size:12.67px;color:#2a2a2a;transform:scaleX(1.0035);transform-origin:50% 0;">Import</span>
<span class="t" style="left:517.57px;top:188.27px;font-size:12.67px;color:#2a2a2a;transform:scaleX(0.8663);transform-origin:50% 0;">Scan</span>
<span class="t" style="left:574.81px;top:188.27px;font-size:12.67px;color:#2a2a2a;transform:scaleX(0.8958);transform-origin:50% 0;">Event</span>
<span class="t" style="left:627.98px;top:188.27px;font-size:12.67px;color:#2a2a2a;transform:scaleX(0.8451);transform-origin:50% 0;">Task</span>
<span class="t" style="left:680.70px;top:188.27px;font-size:12.67px;color:#2a2a2a;transform:scaleX(0.9014);transform-origin:50% 0;">Phone</span>
<span class="t" style="left:673.82px;top:203.27px;font-size:12.67px;color:#2a2a2a;transform:scaleX(0.9249);transform-origin:50% 0;">Message</span>
<span class="t" style="left:746.45px;top:188.27px;font-size:12.67px;color:#2a2a2a;transform:scaleX(1.0101);transform-origin:50% 0;">Activity</span>
<span class="t" style="left:816.11px;top:188.27px;font-size:12.67px;color:#2a2a2a;transform:scaleX(0.9769);transform-origin:50% 0;">Billing</span>
<span class="t" style="left:20.00px;top:251.48px;font-size:12.19px;color:#555;transform:scaleX(0.8239);transform-origin:0 0;">STAGES</span>
<span class="t" style="left:118.00px;top:251.48px;font-size:12.19px;color:#ffffff;transform:scaleX(0.8170);transform-origin:0 0;">FILE SETUP</span>
<span class="t" style="left:221.00px;top:251.48px;font-size:12.19px;color:#666;transform:scaleX(0.8466);transform-origin:0 0;">PRE EXCHANGE</span>
<span class="t" style="left:347.00px;top:251.48px;font-size:12.19px;color:#666;transform:scaleX(0.8625);transform-origin:0 0;">EXCHANGE</span>
<span class="t" style="left:451.00px;top:251.48px;font-size:12.19px;color:#666;transform:scaleX(0.8621);transform-origin:0 0;">PRE COMPLETION</span>
<span class="t" style="left:586.00px;top:251.48px;font-size:12.19px;color:#666;transform:scaleX(0.8934);transform-origin:0 0;">COMPLETION</span>
<span class="t" style="left:699.00px;top:251.48px;font-size:12.19px;color:#666;transform:scaleX(0.8894);transform-origin:0 0;">POST COMPLETION</span>
<span class="t" style="left:843.00px;top:251.48px;font-size:12.19px;color:#666;transform:scaleX(0.8573);transform-origin:0 0;">FILE CLOSING</span>
<span class="t" style="left:13.00px;top:287.42px;font-size:14.62px;color:#444;transform:scaleX(0.8466);transform-origin:0 0;">MATTER DETAILS</span>
<span class="t" style="left:23.00px;top:320.07px;font-size:12.67px;color:#444;transform:scaleX(1.0414);transform-origin:0 0;">Info</span>
<span class="t" style="left:164.00px;top:320.07px;font-size:12.67px;color:#111;">25-08137 - SH/JAMB/SH</span>
<span class="t" style="left:23.00px;top:351.07px;font-size:12.67px;color:#444;transform:scaleX(0.9679);transform-origin:0 0;">Buyer</span>
<span class="t" style="left:164.00px;top:352.77px;font-size:12.67px;color:#111;transform:scaleX(0.9867);transform-origin:0 0;">Harry Kale</span>
<span class="t" style="left:23.00px;top:383.07px;font-size:12.67px;color:#444;transform:scaleX(1.0361);transform-origin:0 0;">Matter Type</span>
<span class="t" style="left:164.00px;top:383.07px;font-size:12.67px;color:#111;transform:scaleX(0.9538);transform-origin:0 0;">Purchase</span>
<span class="t" style="left:23.00px;top:414.07px;font-size:12.67px;color:#444;transform:scaleX(0.9580);transform-origin:0 0;">Seller</span>
<span class="t" style="left:164.00px;top:416.07px;font-size:12.67px;color:#111;transform:scaleX(1.0403);transform-origin:0 0;">Maggie Wood</span>
<span class="t" style="left:41.00px;top:446.07px;font-size:12.67px;color:#444;transform:scaleX(1.0219);transform-origin:0 0;">Solicitor</span>
<span class="t" style="left:164.00px;top:448.07px;font-size:12.67px;color:#111;transform:scaleX(0.9766);transform-origin:0 0;">ABC Solicitors</span>
<span class="t" style="left:164.00px;top:469.07px;font-size:12.67px;color:#444;transform:scaleX(1.0155);transform-origin:0 0;font-style:italic;">Director</span>
<span class="t" style="left:212.60px;top:469.07px;font-size:12.67px;color:#111;transform:scaleX(1.0060);transform-origin:0 0;">Simone Solicitor</span>
<span class="t" style="left:310.20px;top:469.07px;font-size:12.67px;color:#111;">|</span>
<span class="t" style="left:318.00px;top:469.07px;font-size:12.67px;color:#444;transform:scaleX(0.9044);transform-origin:0 0;font-style:italic;">Ref:</span>
<span class="t" style="left:342.00px;top:469.07px;font-size:12.67px;color:#111;transform:scaleX(1.0134);transform-origin:0 0;">25-WOO002</span>
<span class="t" style="left:23.00px;top:499.07px;font-size:12.67px;color:#444;transform:scaleX(1.0089);transform-origin:0 0;">Compliance Details</span>
<span class="t" style="left:164.00px;top:499.07px;font-size:12.67px;color:#111;transform:scaleX(0.9854);transform-origin:0 0;">Client Risk Level: Low | Matter Risk Level: Low</span>
<span class="t" style="left:23.00px;top:530.07px;font-size:12.67px;color:#444;transform:scaleX(1.0106);transform-origin:0 0;">Property Details</span>
<span class="t" style="left:164.00px;top:530.07px;font-size:12.67px;color:#111;transform:scaleX(0.9832);transform-origin:0 0;">26, 15 Offer Street, London, SE1 6TH</span>
<span class="t" style="left:12.00px;top:571.25px;font-size:13.65px;color:#333;transform:scaleX(0.9088);transform-origin:0 0;-webkit-text-stroke:0.4px #333;">ALL FILES</span>
<span class="t" style="left:92.00px;top:571.25px;font-size:13.65px;color:#555;transform:scaleX(0.8899);transform-origin:0 0;">FAVOURITES</span>
<span class="t" style="left:189.00px;top:571.25px;font-size:13.65px;color:#555;transform:scaleX(0.9442);transform-origin:0 0;">DOCUMENTS</span>
<span class="t" style="left:292.00px;top:571.25px;font-size:13.65px;color:#555;transform:scaleX(0.8751);transform-origin:0 0;">MESSAGES</span>
<span class="t" style="left:379.00px;top:571.25px;font-size:13.65px;color:#555;transform:scaleX(0.9191);transform-origin:0 0;">EMAILS</span>
<span class="t" style="left:445.00px;top:571.25px;font-size:13.65px;color:#555;transform:scaleX(0.9134);transform-origin:0 0;">INFOTRACK</span>
<span class="t" style="left:856.00px;top:572.07px;font-size:12.67px;color:#999;transform:scaleX(0.9081);transform-origin:0 0;font-style:italic;">Search...</span>
<span class="t" style="left:53.30px;top:601.88px;font-size:12.19px;color:#444;transform:scaleX(0.9701);transform-origin:0 0;">Documents</span>
<span class="t" style="left:46.00px;top:631.98px;font-size:12.19px;color:#333;transform:scaleX(0.9534);transform-origin:0 0;">Name</span>
<span class="t" style="left:416.00px;top:631.98px;font-size:12.19px;color:#333;transform:scaleX(0.9548);transform-origin:0 0;">Status</span>
<span class="t" style="left:476.00px;top:631.98px;font-size:12.19px;color:#333;transform:scaleX(0.9320);transform-origin:0 0;">To</span>
<span class="t" style="left:600.00px;top:631.98px;font-size:12.19px;color:#333;transform:scaleX(0.9495);transform-origin:0 0;">From</span>
<span class="t" style="left:723.00px;top:631.98px;font-size:12.19px;color:#333;">Date modified</span>
<span class="t" style="left:833.00px;top:631.98px;font-size:12.19px;color:#333;transform:scaleX(0.9745);transform-origin:0 0;">Date created</span>
<span class="t" style="left:942.00px;top:631.98px;font-size:12.19px;color:#333;transform:scaleX(0.9275);transform-origin:0 0;">Size</span>
<span class="t" style="left:1013.00px;top:631.98px;font-size:12.19px;color:#333;transform:scaleX(1.0057);transform-origin:0 0;">Staff</span>
<span class="t" style="left:45.40px;top:660.16px;font-size:13.16px;color:#111;transform:scaleX(0.9536);transform-origin:0 0;">Purchase Questionnaire</span>
<span class="t" style="left:722.00px;top:660.16px;font-size:13.16px;color:#111;">01/10/2025</span>
<span class="t" style="left:832.00px;top:660.16px;font-size:13.16px;color:#111;">01/10/2025</span>
<span class="t" style="left:942.00px;top:660.16px;font-size:13.16px;color:#111;transform:scaleX(0.8972);transform-origin:0 0;">38.6 KB</span>
<span class="t" style="left:1025.00px;top:660.16px;font-size:13.16px;color:#111;transform:scaleX(0.8752);transform-origin:0 0;">SH</span>
<span class="t" style="left:45.40px;top:688.16px;font-size:13.16px;color:#111;transform:scaleX(0.9332);transform-origin:0 0;">Terms of Business</span>
<span class="t" style="left:722.00px;top:688.16px;font-size:13.16px;color:#111;">01/10/2025</span>
<span class="t" style="left:832.00px;top:688.16px;font-size:13.16px;color:#111;">01/10/2025</span>
<span class="t" style="left:942.00px;top:688.16px;font-size:13.16px;color:#111;transform:scaleX(0.8972);transform-origin:0 0;">63.3 KB</span>
<span class="t" style="left:1025.00px;top:688.16px;font-size:13.16px;color:#111;transform:scaleX(0.8752);transform-origin:0 0;">SH</span>
<span class="t" style="left:45.40px;top:716.16px;font-size:13.16px;color:#111;transform:scaleX(0.9584);transform-origin:0 0;">Client Care Letter - Harry Kale</span>
<span class="t" style="left:722.00px;top:716.16px;font-size:13.16px;color:#111;">01/10/2025</span>
<span class="t" style="left:832.00px;top:716.16px;font-size:13.16px;color:#111;">01/10/2025</span>
<span class="t" style="left:942.00px;top:716.16px;font-size:13.16px;color:#111;transform:scaleX(0.8972);transform-origin:0 0;">97.8 KB</span>
<span class="t" style="left:1025.00px;top:716.16px;font-size:13.16px;color:#111;transform:scaleX(0.8752);transform-origin:0 0;">SH</span>
<span class="t" style="left:45.40px;top:744.16px;font-size:13.16px;color:#111;transform:scaleX(0.9826);transform-origin:0 0;">Initial Letter to Client - Harry Kale</span>
<span class="t" style="left:722.00px;top:744.16px;font-size:13.16px;color:#111;">01/10/2025</span>
<span class="t" style="left:832.00px;top:744.16px;font-size:13.16px;color:#111;">01/10/2025</span>
<span class="t" style="left:942.00px;top:744.16px;font-size:13.16px;color:#111;transform:scaleX(0.8972);transform-origin:0 0;">81.1 KB</span>
<span class="t" style="left:1025.00px;top:744.16px;font-size:13.16px;color:#111;transform:scaleX(0.8752);transform-origin:0 0;">SH</span>
<span class="t" style="left:45.40px;top:772.16px;font-size:13.16px;color:#111;transform:scaleX(0.9310);transform-origin:0 0;">Purchase Estimate</span>
<span class="t" style="left:722.00px;top:772.16px;font-size:13.16px;color:#111;">01/10/2025</span>
<span class="t" style="left:832.00px;top:772.16px;font-size:13.16px;color:#111;">01/10/2025</span>
<span class="t" style="left:942.00px;top:772.16px;font-size:13.16px;color:#111;transform:scaleX(0.8972);transform-origin:0 0;">27.9 KB</span>
<span class="t" style="left:1025.00px;top:772.16px;font-size:13.16px;color:#111;transform:scaleX(0.8752);transform-origin:0 0;">SH</span>
<span class="t" style="left:45.40px;top:800.16px;font-size:13.16px;color:#111;transform:scaleX(0.9874);transform-origin:0 0;">Client Identity Questionnaire</span>
<span class="t" style="left:722.00px;top:800.16px;font-size:13.16px;color:#111;">01/10/2025</span>
<span class="t" style="left:832.00px;top:800.16px;font-size:13.16px;color:#111;">01/10/2025</span>
<span class="t" style="left:942.00px;top:800.16px;font-size:13.16px;color:#111;transform:scaleX(0.9037);transform-origin:0 0;">689 KB</span>
<span class="t" style="left:1025.00px;top:800.16px;font-size:13.16px;color:#111;transform:scaleX(0.8752);transform-origin:0 0;">SH</span>
<span class="t" style="left:8.80px;top:862.90px;font-size:11.7px;color:#222;"><span style="display:inline-block;width:90.20px;transform:scaleX(0.9793);transform-origin:0 0">Last refreshed at </span><span style="display:inline-block;width:65.20px;transform:scaleX(1.0274);transform-origin:0 0">01/10/2025 </span><span style="display:inline-block;width:50.80px;transform:scaleX(0.9473);transform-origin:0 0">17:36:00  </span><span style="display:inline-block;width:11.30px;transform:scaleX(0.8192);transform-origin:0 0">-  </span><span style="display:inline-block;width:36.90px;transform:scaleX(0.9755);transform-origin:0 0">6 files  </span><span style="display:inline-block;width:47.60px;transform:scaleX(1.0172);transform-origin:0 0">0 folders</span></span>
<span class="t" style="left:895.00px;top:862.90px;font-size:11.7px;color:#3b86d6;transform:scaleX(1.0179);transform-origin:0 0;">Uploads, Downloads &amp; Exports</span>
<span class="t" style="left:1149.48px;top:295.00px;font-size:13.94px;color:#ffffff;transform:scaleX(0.8763);transform-origin:50% 0;">WIDGETS</span>
<span class="t" style="left:1253.00px;top:295.00px;font-size:13.94px;color:#222;transform:scaleX(0.9178);transform-origin:0 0;">TIMELINE</span>
<span class="t" style="left:1092.00px;top:333.50px;font-size:13.94px;color:#444;transform:scaleX(0.9167);transform-origin:0 0;">BILLING</span>
<span class="t" style="left:1092.00px;top:553.60px;font-size:13.94px;color:#444;transform:scaleX(0.8678);transform-origin:0 0;">NEXT STEP</span>
<span class="t" style="left:1092.00px;top:749.70px;font-size:13.94px;color:#444;transform:scaleX(0.8975);transform-origin:0 0;">CONTACT DETAILS</span>
<span class="t" style="left:1083.00px;top:372.25px;font-size:13.65px;color:#505050;transform:scaleX(1.0335);transform-origin:0 0;-webkit-text-stroke:0.5px #505050;">Client Account Balance</span>
<span class="t" style="left:1326.44px;top:371.42px;font-size:14.62px;color:#4a90e2;transform:scaleX(1.0120);transform-origin:100% 0;text-decoration:underline;">£0.00</span>
<span class="t" style="left:1083.00px;top:401.25px;font-size:13.65px;color:#505050;transform:scaleX(1.0751);transform-origin:0 0;-webkit-text-stroke:0.5px #505050;">Unbilled</span>
<span class="t" style="left:1318.31px;top:400.42px;font-size:14.62px;color:#4a90e2;transform:scaleX(1.0070);transform-origin:100% 0;text-decoration:underline;">£22.00</span>
<span class="t" style="left:1083.00px;top:430.25px;font-size:13.65px;color:#505050;transform:scaleX(1.0386);transform-origin:0 0;-webkit-text-stroke:0.5px #505050;">Unbilled (inc. VAT)</span>
<span class="t" style="left:1318.31px;top:429.42px;font-size:14.62px;color:#4a90e2;transform:scaleX(1.0294);transform-origin:100% 0;text-decoration:underline;">£26.40</span>
<span class="t" style="left:1083.00px;top:459.25px;font-size:13.65px;color:#505050;transform:scaleX(1.0408);transform-origin:0 0;-webkit-text-stroke:0.5px #505050;">Unpaid</span>
<span class="t" style="left:1326.44px;top:458.42px;font-size:14.62px;color:#4a90e2;transform:scaleX(1.0120);transform-origin:100% 0;text-decoration:underline;">£0.00</span>
<span class="t" style="left:1083.00px;top:509.48px;font-size:12.19px;color:#4a90e2;transform:scaleX(0.9816);transform-origin:0 0;">View matter in Smokeball Billing</span>
<span class="t" style="left:1345.24px;top:508.89px;font-size:15.6px;color:#3f7fd0;transform:scaleX(0.8668);transform-origin:50% 0;font-family:'DejaVu Sans',sans-serif;">£</span>
<span class="t" style="left:1139.00px;top:602.92px;font-size:14.62px;color:#666;transform:scaleX(0.9850);transform-origin:0 0;">Send Client Care pack</span>
<span class="t" style="left:1090.00px;top:696.08px;font-size:12.19px;color:#999;transform:scaleX(0.9918);transform-origin:0 0;">04/08/2025</span>
<span class="t" style="left:1215.00px;top:696.48px;font-size:12.19px;color:#222;transform:scaleX(0.9674);transform-origin:0 0;">James Morgan McGill</span>
<span class="t" style="left:1269.44px;top:721.98px;font-size:12.19px;color:#4a90e2;transform:scaleX(0.9532);transform-origin:100% 0;">Done. Next step...</span>
<span class="t" style="left:1122.40px;top:794.91px;font-size:15.11px;color:#1a1a1a;transform:scaleX(0.9947);transform-origin:0 0;-webkit-text-stroke:0.6px #1a1a1a;">Harry Kale</span>
<span class="t" style="left:1122.40px;top:815.57px;font-size:12.67px;color:#444;transform:scaleX(0.9679);transform-origin:0 0;">Buyer</span>
<span class="t" style="left:1088.00px;top:840.25px;font-size:13.65px;color:#333;transform:scaleX(0.9953);transform-origin:0 0;">Mobile</span>
<span class="t" style="left:1142.00px;top:840.48px;font-size:12.19px;color:#4a90e2;transform:scaleX(0.9621);transform-origin:0 0;">07123 654789</span>
<span class="t" style="left:828.04px;top:160.89px;font-size:15.6px;color:#3f7fd0;transform:scaleX(0.8668);transform-origin:50% 0;font-family:'DejaVu Sans',sans-serif;">£</span>
<span class="t" style="left:1258.43px;top:7.79px;font-size:15.6px;color:#ffffff;transform:scaleX(0.9443);transform-origin:50% 0;font-weight:700;">?</span>
</div>
</body>
</html>
